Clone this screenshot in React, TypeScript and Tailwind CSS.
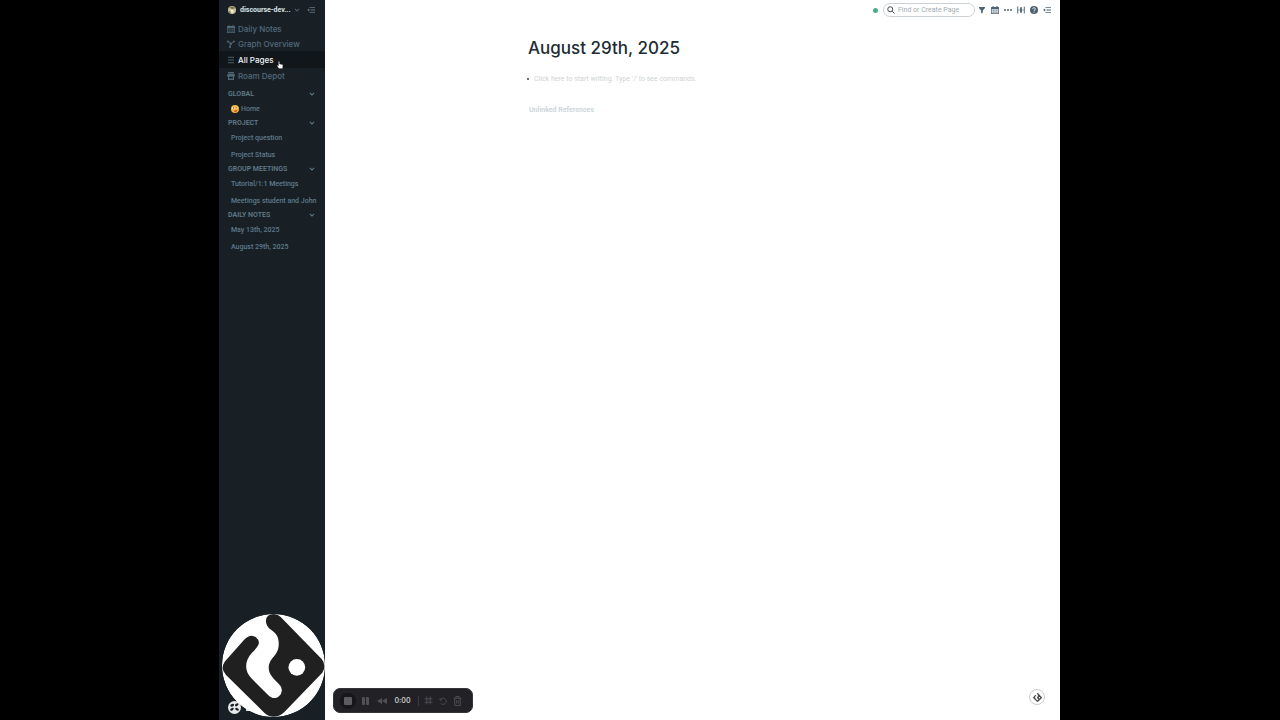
import type { ReactNode } from "react";

const CalendarIcon = ({ className = "" }: { className?: string }) => (
  <svg viewBox="0 0 16 16" className={`size-[8px] shrink-0 ${className}`} fill="currentColor" aria-hidden="true">
    <path fillRule="evenodd" d="M3 0h2v2h6V0h2v2h2a1 1 0 0 1 1 1v12a1 1 0 0 1-1 1H1a1 1 0 0 1-1-1V3a1 1 0 0 1 1-1h2V0ZM1.500 6v8.500h13V6h-13ZM3 7h2.500v2.500H3V7Zm3.800 0h2.400v2.500H6.800V7Zm3.700 0H13v2.500h-2.500V7ZM3 11h2.500v2.500H3V11Zm3.800 0h2.400v2.500H6.800V11Zm3.700 0H13v2.500h-2.500V11Z" />
  </svg>
);

const GraphIcon = () => (
  <svg viewBox="0 0 16 16" className="size-[8px] shrink-0" fill="currentColor" stroke="currentColor" strokeWidth="1.900" aria-hidden="true">
    <path d="M2 3 7 7.500 14 3M7 7.500 6 14" fill="none" />
    <circle cx="2" cy="3" r="1.500" />
    <circle cx="14" cy="3" r="1.300" />
    <circle cx="7.500" cy="7.500" r="1.800" />
    <circle cx="6" cy="14" r="1.300" />
  </svg>
);

const ListIcon = () => (
  <svg viewBox="0 0 16 16" className="size-[8px] shrink-0" stroke="currentColor" strokeWidth="1.800" aria-hidden="true">
    <path d="M2 2.500h12M2 8h12M2 13.500h12" />
  </svg>
);

const ShopIcon = () => (
  <svg viewBox="0 0 16 16" className="size-[8px] shrink-0" fill="currentColor" aria-hidden="true">
    <path fillRule="evenodd" d="M2 0h12v2.500H2V0Zm-.5 3.300h13L16 7c0 1.200-.8 2-2 2v7H2V9C.8 9 0 8.200 0 7l1.500-3.700ZM4 9.500V13h8V9.500H4Z" />
  </svg>
);

const FoldIcon = () => (
  <svg viewBox="0 0 16 16" className="size-[8px]" fill="currentColor" aria-hidden="true">
    <path d="M5 2h11v1.700H5zM7 7.200h9v1.700H7zM5 12.400h11v1.700H5zM0 8l4.500-3.200v6.400z" />
  </svg>
);

const Chevron = ({ className = "" }: { className?: string }) => (
  <svg viewBox="0 0 10 10" className={`size-[6px] shrink-0 ${className}`} fill="none" stroke="currentColor" strokeWidth="1.800" aria-hidden="true">
    <path d="m1.500 3 3.500 3.700L8.500 3" />
  </svg>
);

const ZanyFace = () => (
  <svg viewBox="0 0 16 16" className="size-[8px] shrink-0" aria-label="Zany face" role="img">
    <circle cx="8" cy="8" r="8" fill="#f5b73c" />
    <circle cx="4.800" cy="5.800" r="2.400" fill="#fff4dc" />
    <circle cx="11.500" cy="5" r="1.700" fill="#fff4dc" />
    <circle cx="5" cy="5.800" r="1.100" fill="#3d2914" />
    <circle cx="11.400" cy="5" r=".9" fill="#3d2914" />
    <path d="M5 11c3 .8 5 .3 7.500-2-.2 3.300-2 4.800-4 4.800-1.800 0-3-1-3.500-2.800Z" fill="#a3502a" />
    <path d="M8 11.500c1.500 0 2.500-.5 3.300-1.300.5 2.500 0 4.300-1.500 4.300-1.300 0-1.800-1.200-1.800-3Z" fill="#e5484f" />
  </svg>
);

const NavRow = ({ icon, label, active = false }: { icon: ReactNode; label: string; active?: boolean }) => (
  <a
    href="#"
    className={
      active
        ? "flex h-[17px] items-center gap-[3px] bg-[#10161a] pl-[8px] text-[8px] font-medium text-[#f0f3f5]"
        : "flex h-[15px] items-center gap-[3px] pl-[8px] text-[8px] leading-[14px] font-medium text-[#52697a]"
    }
  >
    <span className="text-[#4f6675]">{icon}</span>
    {label}
  </a>
);

const Section = ({ title, children }: { title: string; children: ReactNode }) => (
  <section>
    <button type="button" className="flex h-[12px] w-full items-center justify-between pr-[10px] pl-[9px] font-['Roboto',sans-serif] text-[7px] leading-[12px] font-semibold text-[#617887]">
      {title}
      <Chevron />
    </button>
    {children}
  </section>
);

const PageLink = ({ children }: { children: ReactNode }) => (
  <a href="#" className="flex h-[17px] items-center gap-[2px] pt-px pl-[12px] font-['Roboto',sans-serif] text-[7px] leading-[12px] font-medium whitespace-nowrap text-[#5f7a8b]">
    {children}
  </a>
);

const LogoMark = () => (
  <>
    <path
      fill="#202020"
      d="M149 44Q150 24 172 24Q184 24 193 33L315 158Q331 177 317 199L204 316Q190 330 172 330Q157 330 144 318L30 206Q12 187 26 166L84 101Q103 81 119 93Q133 104 125 119Q121 126 108 139C85 164 84 193 105 215L153 263Q172 282 187 270Q202 257 193 239C187 231 175 222 168 212C153 193 154 174 168 156C178 144 188 134 187 109C186 85 174 79 160 68Q149 58 149 44Z"
    />
    <circle cx="241" cy="183" r="25" fill="#fff" />
  </>
);

const Sidebar = () => (
  <aside className="relative flex w-[106px] shrink-0 flex-col bg-[#182026]">
    <header className="mb-px flex h-[20px] items-center justify-between pr-[10px] pl-[9px]">
      <button type="button" className="flex items-center gap-[4px] font-['Roboto',sans-serif] text-[7px] leading-[12px] font-bold whitespace-nowrap text-[#dce2e6]">
        <svg viewBox="0 0 16 16" className="size-[8px] shrink-0" aria-hidden="true">
          <circle cx="8" cy="8" r="8" fill="#c5bd96" />
          <path d="M1 5a8 8 0 0 1 14 0c-3-2-4 2-7 1S4 3 1 5Z" fill="#77714f" />
          <path d="M5 8l4-1 3 4-3 4-5-3z" fill="#eee8d0" />
          <path d="M1 10l4 1 1 4a8 8 0 0 1-5-5Z" fill="#70745b" />
        </svg>
        discourse-dev...
        <Chevron className="text-[#4d5f6b]" />
      </button>
      <button type="button" aria-label="Collapse sidebar" className="text-[#647987]">
        <FoldIcon />
      </button>
    </header>
    <nav>
      <NavRow icon={<CalendarIcon />} label="Daily Notes" />
      <NavRow icon={<GraphIcon />} label="Graph Overview" />
      <NavRow icon={<ListIcon />} label="All Pages" active />
      <NavRow icon={<ShopIcon />} label="Roam Depot" />
    </nav>
    <div className="mt-[5px]">
      <Section title="GLOBAL">
        <PageLink><ZanyFace />Home</PageLink>
      </Section>
      <Section title="PROJECT">
        <PageLink>Project question</PageLink>
        <PageLink>Project Status</PageLink>
      </Section>
      <Section title="GROUP MEETINGS">
        <PageLink>Tutorial/1:1 Meetings</PageLink>
        <PageLink>Meetings student and John</PageLink>
      </Section>
      <Section title="DAILY NOTES">
        <PageLink>May 13th, 2025</PageLink>
        <PageLink>August 29th, 2025</PageLink>
      </Section>
    </div>
    <div className="mt-auto mb-[6px] flex items-center gap-[5px] pl-[9px]">
      <svg viewBox="0 0 26 26" className="size-[13px]" aria-label="Account" role="img">
        <circle cx="13" cy="13" r="13" fill="#e8eaea" />
        <g fill="#182026">
          <ellipse cx="8.500" cy="8.500" rx="4" ry="2.400" transform="rotate(-20 8.500 8.500)" />
          <ellipse cx="17.500" cy="7.500" rx="4" ry="2.400" transform="rotate(-35 17.500 7.500)" />
          <ellipse cx="8" cy="16.500" rx="4" ry="2.400" transform="rotate(-35 8 16.500)" />
          <ellipse cx="18" cy="16.500" rx="4" ry="2.400" transform="rotate(30 18 16.500)" />
        </g>
      </svg>
      <span className="mt-[4px] h-[2px] w-[3px] bg-[#d5d9dc]" />
    </div>
    <svg viewBox="18 24 307 307" className="absolute bottom-[3px] left-[3px] size-[103px]" aria-label="Camera preview" role="img">
      <defs>
        <clipPath id="bubble"><circle cx="171.500" cy="177.500" r="153.500" /></clipPath>
      </defs>
      <g clipPath="url(#bubble)">
        <circle cx="171.500" cy="177.500" r="153.500" fill="#fff" />
        <LogoMark />
      </g>
    </svg>
    <svg viewBox="0 0 12 16" className="absolute top-[61px] left-[58px] h-[8px] w-[6px]" aria-hidden="true">
      <path d="M3 1.500c0-1.500 2-1.500 2 0V6l5 1.200c1.500.4 2 1.200 1.800 2.500L11 15H4L.5 10.500c-1-1.300.6-2.400 1.700-1.300L3 10V1.500Z" fill="#fff" stroke="#222" strokeWidth=".5" />
    </svg>
  </aside>
);

const TopBar = () => (
  <header className="flex h-[20px] items-center justify-end pr-[9px] text-[#4c6272]">
    <span className="mr-[5px] size-[5px] rounded-full bg-[#4cad87]" />
    <div className="flex h-[14px] w-[92px] items-center gap-[3px] rounded-full border border-[#cbd1d5] bg-white pl-[3px]">
      <svg viewBox="0 0 16 16" className="size-[8px] shrink-0" fill="none" stroke="#34444f" strokeWidth="1.900" aria-hidden="true">
        <circle cx="6.500" cy="6.500" r="5" />
        <path d="m10.500 10.500 4.500 4.500" />
      </svg>
      <input
        type="text"
        aria-label="Find or Create Page"
        placeholder="Find or Create Page"
        className="h-[12px] w-full min-w-0 bg-transparent font-['Roboto',sans-serif] text-[7px] leading-[12px] outline-none placeholder:text-[#a3abb1]"
      />
    </div>
    <div className="ml-[3px] flex items-center gap-[5px]">
      <button type="button" aria-label="Filter">
        <svg viewBox="0 0 16 16" className="size-[8px]" fill="currentColor" aria-hidden="true">
          <path d="M2 2h12v2l-4.300 5v4l-3.400 2V9L2 4z" />
        </svg>
      </button>
      <button type="button" aria-label="Calendar"><CalendarIcon /></button>
      <button type="button" aria-label="More">
        <svg viewBox="0 0 16 16" className="size-[8px]" fill="currentColor" aria-hidden="true">
          <circle cx="2" cy="8" r="1.900" /><circle cx="8" cy="8" r="1.900" /><circle cx="14" cy="8" r="1.900" />
        </svg>
      </button>
      <button type="button" aria-label="Page width">
        <svg viewBox="0 0 16 16" className="size-[8px]" fill="currentColor" aria-hidden="true">
          <path d="M.5 1h1.900v14H.5zM13.600 1h1.900v14h-1.900zM6.200 2.500h3.600v11H6.200zM3.500 6 5.500 8l-2 2zM12.500 6l-2 2 2 2z" />
        </svg>
      </button>
      <button type="button" aria-label="Help">
        <svg viewBox="0 0 16 16" className="size-[8px]" aria-hidden="true">
          <circle cx="8" cy="8" r="8" fill="currentColor" />
          <path d="M5.300 6c.2-3.500 5.500-3.200 5.500-.2C10.800 8 8 7.700 8 10M8 11.300v2" fill="none" stroke="#fff" strokeWidth="1.700" />
        </svg>
      </button>
      <button type="button" aria-label="Open right sidebar"><FoldIcon /></button>
    </div>
  </header>
);

const RecorderBar = () => (
  <div className="absolute bottom-[7px] left-[8px] flex h-[25px] w-[140px] items-center rounded-[7px] border border-[#333338] bg-[#222226] pl-[6px] text-[#505055]">
    <button type="button" aria-label="Stop" className="flex size-[16px] items-center justify-center rounded-full bg-[#17171a]">
      <span className="size-[8px] rounded-[1px] bg-[#5c5c60]" />
    </button>
    <button type="button" aria-label="Pause" className="ml-[6px] flex gap-[1px]">
      <span className="h-[8px] w-[3px] rounded-[1px] bg-[#505055]" />
      <span className="h-[8px] w-[3px] rounded-[1px] bg-[#505055]" />
    </button>
    <button type="button" aria-label="Rewind" className="ml-[8px]">
      <svg viewBox="0 0 20 12" className="h-[6px] w-[10px]" fill="currentColor" aria-hidden="true">
        <path d="M10 0v12L0 6zM20 0v12L10 6z" />
      </svg>
    </button>
    <span className="w-[31px] text-center text-[7px] leading-[8px] font-semibold text-[#c5c5c8]">0:00</span>
    <span className="h-[10px] w-px bg-[#39393e]" />
    <button type="button" aria-label="Grid" className="ml-[5px]">
      <svg viewBox="0 0 16 16" className="size-[9px]" fill="none" stroke="currentColor" strokeWidth="1.600" aria-hidden="true">
        <path d="M5 1v14M11 1v14M1 5h14M1 11h14" />
      </svg>
    </button>
    <button type="button" aria-label="Restart" className="ml-[6px]">
      <svg viewBox="0 0 16 16" className="size-[8px]" fill="none" stroke="currentColor" strokeWidth="1.700" aria-hidden="true">
        <path d="M2 2v4h4M2.500 6A6.200 6.200 0 1 1 3 12" />
      </svg>
    </button>
    <button type="button" aria-label="Delete" className="ml-[6px]">
      <svg viewBox="0 0 16 18" className="h-[10px] w-[9px]" fill="none" stroke="currentColor" strokeWidth="1.700" aria-hidden="true">
        <path d="M1 4h14M5 4V1h6v3M3 4v13h10V4M6.500 7.500v6M9.500 7.500v6" />
      </svg>
    </button>
  </div>
);

export default function App() {
  return (
    <div className="min-h-screen bg-black pr-px font-['Inter',sans-serif]">
      <div className="mx-auto flex min-h-screen w-full max-w-[841px]">
        <Sidebar />
        <main className="relative min-w-0 flex-1 bg-white">
          <TopBar />
          <article className="mt-[16px] pl-[203px]">
            <h1 className="text-[17px] leading-[24px] font-[450] text-[#202b33]">August 29th, 2025</h1>
            <div className="mt-[13px] flex h-[12px] items-center gap-[5px]">
              <span className="-ml-px size-[2px] rounded-full bg-[#34444f]" />
              <p className="font-['Roboto',sans-serif] text-[7px] text-[#cfd3d5]">Click here to start writing. Type '/' to see commands.</p>
            </div>
            <h2 className="mt-[19px] pl-px font-['Roboto',sans-serif] text-[7px] leading-[12px] font-bold text-[#cdd6dc]">Unlinked References</h2>
          </article>
          <RecorderBar />
          <button
            type="button"
            aria-label="Discourse Graphs"
            className="absolute right-[15px] bottom-[15px] flex size-[16px] items-center justify-center rounded-full border border-[#c8cdd1] bg-white"
          >
            <svg viewBox="18 24 307 307" className="size-[9px]" aria-hidden="true">
              <g opacity=".8"><LogoMark /></g>
            </svg>
          </button>
        </main>
      </div>
    </div>
  );
}
